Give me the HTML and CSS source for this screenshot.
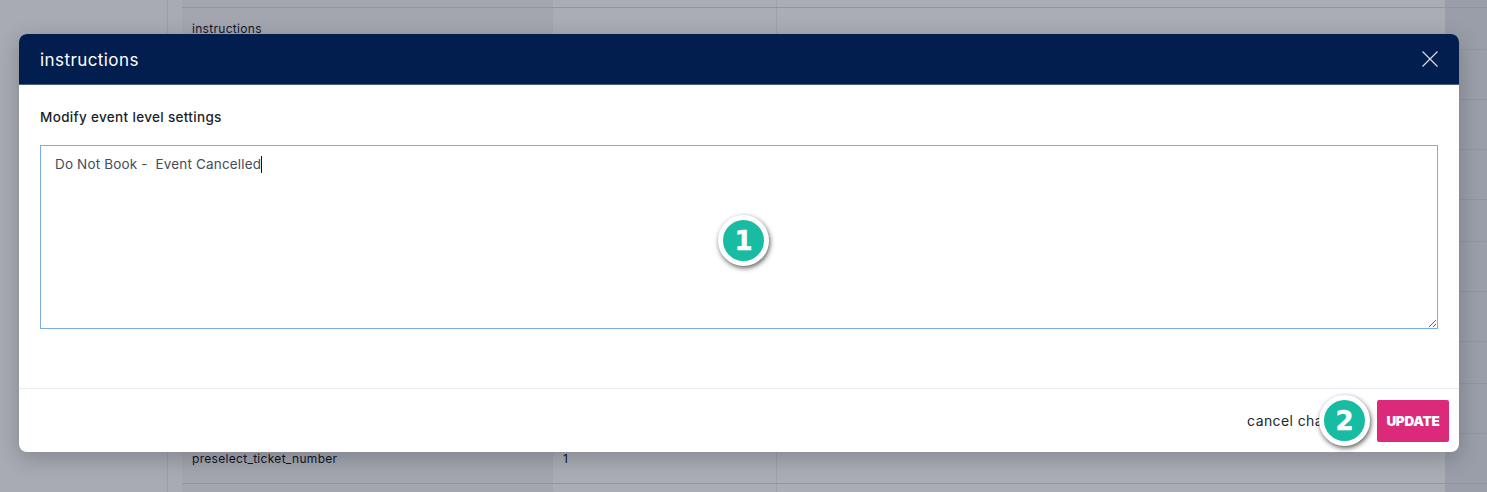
FILE: index.html
```html
<!DOCTYPE html>
<html lang="en">
<head>
<meta charset="utf-8">
<title>instructions</title>
<link rel="stylesheet" href="styles.css">
</head>
<body>
<div class="page">
  <aside class="sidebar"></aside>
  <main class="table">
    <div class="row row-top"><div class="cell key"></div><div class="cell val"></div><div class="cell rest"></div><div class="cell edge"></div></div>
    <div class="row row-short"><div class="cell key">instructions</div><div class="cell val"></div><div class="cell rest"></div><div class="cell edge"></div></div>
    <div class="row"><div class="cell key"></div><div class="cell val"></div><div class="cell rest"></div><div class="cell edge"></div></div>
    <div class="row"><div class="cell key"></div><div class="cell val"></div><div class="cell rest"></div><div class="cell edge"></div></div>
    <div class="row"><div class="cell key"></div><div class="cell val"></div><div class="cell rest"></div><div class="cell edge"></div></div>
    <div class="row row-short"><div class="cell key"></div><div class="cell val"></div><div class="cell rest"></div><div class="cell edge"></div></div>
    <div class="row"><div class="cell key"></div><div class="cell val"></div><div class="cell rest"></div><div class="cell edge"></div></div>
    <div class="row"><div class="cell key"></div><div class="cell val"></div><div class="cell rest"></div><div class="cell edge"></div></div>
    <div class="row row-short"><div class="cell key"></div><div class="cell val"></div><div class="cell rest"></div><div class="cell edge"></div></div>
    <div class="row"><div class="cell key"></div><div class="cell val"></div><div class="cell rest"></div><div class="cell edge"></div></div>
    <div class="row"><div class="cell key">preselect_ticket_number</div><div class="cell val">1</div><div class="cell rest"></div><div class="cell edge"></div></div>
    <div class="row row-end"><div class="cell key"></div><div class="cell val"></div><div class="cell rest"></div><div class="cell edge"></div></div>
  </main>
</div>

<section class="modal">
  <header class="modal-head">
    <h2 class="modal-title">instructions</h2>
    <button class="close" aria-label="Close">
      <svg class="close-icon" viewBox="0 0 16 16" width="16" height="16"><path d="M0.5 0.5L15.5 15.5M15.5 0.5L0.5 15.5"/></svg>
    </button>
  </header>
  <div class="modal-body">
    <p class="label">Modify event level settings</p>
    <div class="textarea">Do Not Book -  Event Cancelled<span class="caret"></span></div>
  </div>
  <footer class="modal-foot">
    <span class="cancel">cancel changes</span>
    <button class="update">UPDATE</button>
  </footer>
</section>

<div class="badge badge-one">1</div>
<div class="badge badge-two">2</div>
</body>
</html>
```
FILE: styles.css
```css
* { box-sizing: border-box; }
html, body { margin: 0; height: 100%; overflow: hidden; }
body {
  font-family: Inter, "Liberation Sans", sans-serif;
  background: #a8abb3;
  position: relative;
}

.page { display: flex; height: 492px; overflow: hidden; }
.sidebar { width: 168px; flex: none; background: #a8abb3; border-right: 1px solid #9b9ea8; }
.table { margin-left: 14px; flex: none; width: 1305px; }

.row {
  display: flex;
  height: 50px;
  border-bottom: 1px solid #92959f;
}
.row-top { height: 8px; }
.row-short { height: 42px; }
.row-end { height: 9px; border-bottom: 0; }

.cell {
  font-size: 12px;
  letter-spacing: .3px;
  color: #10142a;
  display: flex;
  align-items: center;
}
.key { width: 371px; padding-left: 10px; background: #a3a6af; }
.val { width: 224px; padding-left: 10px; background: #abadb5; border-right: 1px solid #9da1ab; }
.rest { width: 668px; background: #abadb5; }
.edge { width: 42px; background: #9a9ea9; }

.modal {
  position: absolute;
  left: 19px;
  top: 34px;
  width: 1440px;
  height: 418px;
  display: flex;
  flex-direction: column;
  background: #fff;
  border-radius: 8px;
  box-shadow: 0 6px 22px rgba(0, 0, 0, .22);
  overflow: hidden;
}
.modal-head {
  height: 51px;
  flex: none;
  background: #021e4f;
  display: flex;
  align-items: center;
  justify-content: space-between;
  padding: 0 21px;
  border-bottom: 1px solid #4a6088;
}
.modal-title { margin: 2px 0 0; font-size: 17px; font-weight: 400; letter-spacing: .42px; color: #fff; }
.close { background: none; border: 0; padding: 0; display: flex; }
.close-icon path { stroke: #dfe4ec; stroke-width: 1.1; fill: none; }

.modal-body { flex: 1; padding: 0 21px; }
.label { margin: 24px 0 0; font-size: 13.5px; line-height: 17px; font-weight: 450; letter-spacing: .33px; color: #1b1f2c; }
.textarea {
  margin-top: 19px;
  height: 184px;
  border: 1px solid #79aeea;
  padding: 10px 14px;
  font-size: 13.5px;
  line-height: 17px;
  letter-spacing: .16px;
  color: #454c5e;
  white-space: pre;
  resize: both;
  overflow: auto;
}
.caret { display: inline-block; width: 1px; height: 17px; background: #111; vertical-align: top; }

.modal-foot {
  height: 64px;
  flex: none;
  border-top: 1px solid #e8ebf3;
  display: flex;
  align-items: center;
  justify-content: flex-end;
  padding: 0 10px 0 0;
}
.cancel { font-size: 14px; letter-spacing: .4px; color: #23262f; margin-right: 20px; }
.update {
  width: 72px;
  height: 42px;
  border: 0;
  border-radius: 2px;
  background: #dc2a7a;
  color: #fff;
  font-family: inherit;
  font-size: 13.5px;
  font-weight: 900;
  letter-spacing: -.25px;
  padding: 0;
}

.badge {
  position: absolute;
  width: 51px;
  height: 51px;
  border-radius: 50%;
  background: #17bca3;
  border: 5px solid #fff;
  box-shadow: 1px 2px 5px rgba(0, 0, 0, .65);
  color: #fff;
  font-family: "DejaVu Sans", sans-serif;
  font-weight: 700;
  font-size: 26px;
  line-height: 41px;
  padding-top: 1px;
  display: flex;
  justify-content: center;
  -webkit-text-stroke: .4px #fff;
}
.badge-one { left: 718px; top: 215px; }
.badge-two { left: 1319px; top: 395px; }
```
